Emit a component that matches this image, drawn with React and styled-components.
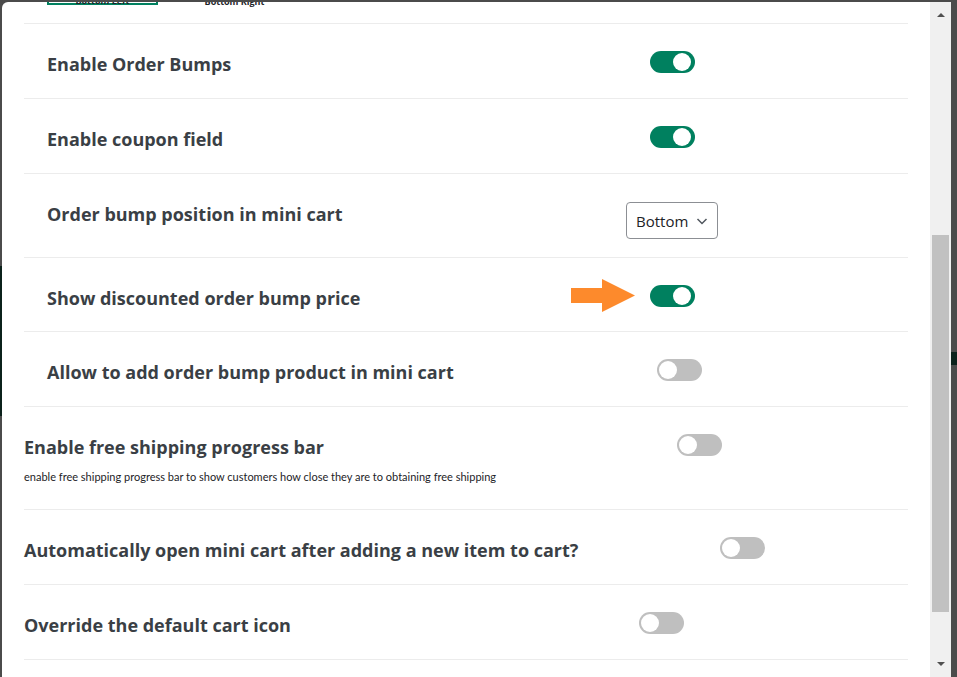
import React from "react";
import styled, { createGlobalStyle } from "styled-components";

const GlobalStyle = createGlobalStyle`
  html, body {
    margin: 0;
    padding: 0;
    overflow: hidden;
  }
  * {
    box-sizing: border-box;
  }
`;

const rows = [
  { label: "Enable Order Bumps", indent: true, h: 74, at: 626, kind: "toggle", on: true },
  { label: "Enable coupon field", indent: true, h: 74, at: 626, kind: "toggle", on: true },
  { label: "Order bump position in mini cart", indent: true, h: 83, at: 602, kind: "select" },
  { label: "Show discounted order bump price", indent: true, h: 73, at: 547, kind: "arrow", on: true },
  { label: "Allow to add order bump product in mini cart", indent: true, h: 74, at: 633, kind: "toggle", on: false },
  {
    label: "Enable free shipping progress bar",
    desc: "enable free shipping progress bar to show customers how close they are to obtaining free shipping",
    h: 102,
    at: 653,
    kind: "toggle",
    on: false,
  },
  { label: "Automatically open mini cart after adding a new item to cart?", h: 74, at: 696, kind: "toggle", on: false },
  { label: "Override the default cart icon", h: 74, at: 615, kind: "toggle", on: false },
];

function Toggle({ on }) {
  return (
    <Switch $on={on}>
      <Knob $on={on} />
    </Switch>
  );
}

function Control({ row }) {
  if (row.kind === "select") {
    return (
      <Select>
        <span>Bottom</span>
        <svg width="12" height="12" viewBox="0 0 12 12">
          <path d="M1.5 4 L6 8.5 L10.5 4" fill="none" stroke="#50575e" strokeWidth="1.5" />
        </svg>
      </Select>
    );
  }
  if (row.kind === "arrow") {
    return (
      <ControlCell>
        <Pointer width="64" height="33" viewBox="0 0 64 33">
          <rect x="0" y="9" width="32" height="15" fill="#fd8a2c" />
          <polygon points="31,0 64,16.5 31,33" fill="#fd8a2c" />
        </Pointer>
        <Toggle on={row.on} />
      </ControlCell>
    );
  }
  return <Toggle on={row.on} />;
}

export default function App() {
  return (
    <>
      <GlobalStyle />
      <Page>
        <Modal>
          <Content>
            <TabStrip>
              <Tab $active>
                <TabLabel $shift={3}>Bottom Left</TabLabel>
              </Tab>
              <Tab>
                <TabLabel $shift={4}>Bottom Right</TabLabel>
              </Tab>
            </TabStrip>
            {rows.map((row) => (
              <Row key={row.label} $h={row.h} $at={row.at}>
                <LabelCell $indent={row.indent}>
                  <Label>{row.label}</Label>
                  {row.desc && <Desc>{row.desc}</Desc>}
                </LabelCell>
                <ControlSlot>
                  <Control row={row} />
                </ControlSlot>
              </Row>
            ))}
          </Content>
          <Scrollbar>
            <ScrollArrow $down={false} />
            <Track>
              <Thumb />
            </Track>
            <ScrollArrow $down />
          </Scrollbar>
        </Modal>
      </Page>
    </>
  );
}

const Page = styled.div`
  height: 100vh;
  display: flex;
  padding: 2px 6px 0 2px;
  background:
    linear-gradient(#0b211b, #0b211b) left 0 top 266px / 2px 150px no-repeat,
    linear-gradient(#0b211b, #0b211b) right 0 top 352px / 6px 13px no-repeat,
    #4b4b4b;
`;

const Modal = styled.div`
  flex: 1;
  display: flex;
  background: #ffffff;
  border-radius: 6px 0 0 0;
  overflow: hidden;
`;

const Content = styled.div`
  flex: 1;
  padding: 0 22px;
  overflow: hidden;
  font-family: "Open Sans", "DejaVu Sans", sans-serif;
`;

const TabStrip = styled.div`
  height: 22px;
  display: flex;
  align-items: flex-start;
  gap: 21px;
  padding-left: 23px;
  border-bottom: 1px solid #ececec;
  overflow: hidden;
`;

const Tab = styled.div`
  width: 111px;
  height: 40px;
  margin-top: -37px;
  flex-shrink: 0;
  display: flex;
  align-items: flex-end;
  justify-content: center;
  border: 2px solid ${(p) => (p.$active ? "#00805f" : "transparent")};
`;

const TabLabel = styled.span`
  font-size: 9px;
  font-weight: 700;
  line-height: 10px;
  margin-bottom: -${(p) => p.$shift}px;
  color: #1d2327;
  white-space: nowrap;
`;

const Row = styled.div`
  height: ${(p) => p.$h + 1}px;
  display: grid;
  grid-template-columns: ${(p) => p.$at}px auto;
  align-items: flex-start;
  padding-top: 24px;
  border-bottom: 1px solid #ececec;
`;

const LabelCell = styled.div`
  padding-left: ${(p) => (p.$indent ? "23px" : "0")};
  padding-top: 4px;
  white-space: nowrap;
`;

const Label = styled.div`
  font-size: 18px;
  font-weight: 700;
  color: #3a3f45;
`;

const Desc = styled.div`
  margin-top: 11px;
  font-family: Lato, "Liberation Sans", sans-serif;
  font-size: 11px;
  line-height: 14px;
  color: #1d2327;
`;

const ControlSlot = styled.div`
  padding-top: 3px;
  display: flex;
`;

const ControlCell = styled.div`
  display: flex;
  align-items: center;
  gap: 15px;
`;

const Pointer = styled.svg`
  display: block;
  margin: -6px 0 -5px;
`;

const Switch = styled.div`
  position: relative;
  width: 45px;
  height: 22px;
  border-radius: 11px;
  background: ${(p) => (p.$on ? "#00805f" : "#bfbfbf")};
  flex-shrink: 0;
`;

const Knob = styled.div`
  position: absolute;
  top: 2px;
  left: ${(p) => (p.$on ? "23px" : "2px")};
  width: 18px;
  height: 18px;
  border-radius: 50%;
  background: #ffffff;
`;

const Select = styled.div`
  width: 92px;
  height: 37px;
  margin-top: 1px;
  display: flex;
  align-items: center;
  justify-content: space-between;
  padding: 0 9px 0 9px;
  border: 1px solid #8c8f94;
  border-radius: 4px;
  font-size: 15px;
  font-weight: 500;
  color: #1d2327;
`;

const Scrollbar = styled.div`
  width: 21px;
  display: flex;
  flex-direction: column;
  background: #f0f0f0;
`;

const ScrollArrow = styled.div`
  height: 17px;
  flex-shrink: 0;
  display: flex;
  justify-content: center;
  align-items: ${(p) => (p.$down ? "flex-start" : "flex-end")};
  padding: ${(p) => (p.$down ? "2px 0 0" : "0 0 2px")};

  &::before {
    content: "";
    width: 0;
    height: 0;
    border-left: 4px solid transparent;
    border-right: 4px solid transparent;
    ${(p) =>
      p.$down ? "border-top: 4px solid #505050;" : "border-bottom: 4px solid #505050;"}
  }
`;

const Track = styled.div`
  flex: 1;
  padding: 0 2px;
`;

const Thumb = styled.div`
  margin-top: 216px;
  height: 377px;
  background: #c1c1c1;
`;
